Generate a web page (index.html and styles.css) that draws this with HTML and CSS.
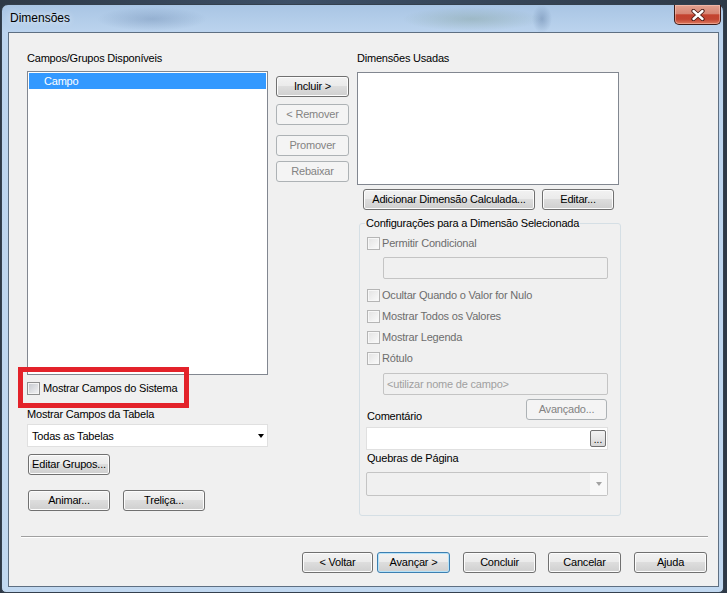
FILE: index.html
```html
<!DOCTYPE html>
<html lang="pt">
<head>
<meta charset="utf-8">
<title>Dimensões</title>
<link rel="stylesheet" href="styles.css">
</head>
<body>
<div class="window">
  <div class="titlebar">
    <span class="title">Dimensões</span>
    <div class="close">
      <svg width="14" height="12" viewBox="0 0 14 12">
        <path d="M2.5 2 L11.5 10 M11.5 2 L2.5 10" stroke="#4a1a14" stroke-width="4.2" stroke-linecap="round"/>
        <path d="M2.5 2 L11.5 10 M11.5 2 L2.5 10" stroke="#ffffff" stroke-width="2.4" stroke-linecap="round"/>
      </svg>
    </div>
  </div>
  <div class="client">
    <div class="columns">
      <div class="col col-left">
        <div class="label">Campos/Grupos Disponíveis</div>
        <div class="listbox list-left">
          <div class="item selected">Campo</div>
        </div>
        <div class="check sys"><span class="box"></span><span class="ctext">Mostrar Campos do Sistema</span></div>
        <div class="label lbl-tabela">Mostrar Campos da Tabela</div>
        <div class="combo"><span>Todas as Tabelas</span><span class="arrow"></span></div>
        <div class="btn btn-grupos">Editar Grupos...</div>
        <div class="row-anim">
          <div class="btn btn-w82">Animar...</div>
          <div class="btn btn-w82">Treliça...</div>
        </div>
      </div>
      <div class="col col-mid">
        <div class="btn btn-mid">Incluir &gt;</div>
        <div class="btn btn-mid disabled m-rem">&lt; Remover</div>
        <div class="btn btn-mid disabled m-pro">Promover</div>
        <div class="btn btn-mid disabled m-reb">Rebaixar</div>
      </div>
      <div class="col col-right">
        <div class="label">Dimensões Usadas</div>
        <div class="listbox list-right"></div>
        <div class="row-add">
          <div class="btn btn-add">Adicionar Dimensão Calculada...</div>
          <div class="btn btn-edit">Editar...</div>
        </div>
        <fieldset class="group">
          <legend>Configurações para a Dimensão Selecionada</legend>
          <div class="check dis g-first"><span class="box"></span><span class="ctext">Permitir Condicional</span></div>
          <div class="textbox dis-box tb-cond"></div>
          <div class="check dis g-ocultar"><span class="box"></span><span class="ctext">Ocultar Quando o Valor for Nulo</span></div>
          <div class="check dis g-next"><span class="box"></span><span class="ctext">Mostrar Todos os Valores</span></div>
          <div class="check dis g-next"><span class="box"></span><span class="ctext">Mostrar Legenda</span></div>
          <div class="check dis g-next"><span class="box"></span><span class="ctext">Rótulo</span></div>
          <div class="textbox dis-box tb-rot">&lt;utilizar nome de campo&gt;</div>
          <div class="row-coment">
            <div class="label lbl-coment">Comentário</div>
            <div class="btn disabled btn-avanc">Avançado...</div>
          </div>
          <div class="textbox tb-coment"><div class="dots">...</div></div>
          <div class="label lbl-quebras">Quebras de Página</div>
          <div class="combo dis-combo"><span></span><span class="arrow-zone"><span class="arrow gray"></span></span></div>
        </fieldset>
      </div>
    </div>
    <div class="separator"></div>
    <div class="footer">
      <div class="btn btn-foot f-voltar">&lt; Voltar</div>
      <div class="btn btn-foot default f-avancar">Avançar &gt;</div>
      <div class="btn btn-foot f-gap">Concluir</div>
      <div class="btn btn-foot f-gap2">Cancelar</div>
      <div class="btn btn-foot f-gap">Ajuda</div>
    </div>
    <div class="annotation"></div>
  </div>
</div>
</body>
</html>
```
FILE: styles.css
```css
* { box-sizing: border-box; }
html, body { margin: 0; padding: 0; }
body {
  width: 727px;
  height: 593px;
  overflow: hidden;
  background: linear-gradient(90deg, #2e3947, #3d4f66 40%, #2e3947);
  font-family: "Liberation Sans", Arial, sans-serif;
  font-size: 11px;
  letter-spacing: -0.2px;
  color: #000;
}

.window {
  margin: 4px 0 0 1px;
  width: 723px;
  height: 589px;
  border: 1px solid #34404e;
  border-radius: 7px 7px 5px 5px;
  padding: 0 4px 5px 6px;
  display: flex;
  flex-direction: column;
  background:
    radial-gradient(55px 12px at 150px 14px, rgba(95, 125, 165, 0.35), rgba(95, 125, 165, 0)),
    radial-gradient(70px 12px at 470px 14px, rgba(110, 140, 120, 0.3), rgba(110, 140, 120, 0)),
    radial-gradient(10px 14px at 540px 14px, rgba(70, 100, 140, 0.35), rgba(70, 100, 140, 0)),
    linear-gradient(#a9c5e4, #bcd4ee 28px, #c1d8f0);
}

.titlebar {
  height: 27px;
  display: flex;
  justify-content: space-between;
  align-items: flex-start;
}
.title {
  padding: 6px 0 0 2px;
  font-size: 12px;
  line-height: 14px;
  letter-spacing: 0;
  color: #000;
  text-shadow: 0 0 6px rgba(255, 255, 255, 0.9);
}
.close {
  width: 47px;
  height: 20px;
  margin-right: -2px;
  border: 1px solid #3e1c18;
  border-top: none;
  border-radius: 0 0 5px 5px;
  background: linear-gradient(#e3a18f 0%, #d78675 45%, #c4432f 52%, #c24532 75%, #de7a5e 100%);
  box-shadow: inset 0 0 0 1px rgba(255, 210, 200, 0.45);
  display: flex;
  align-items: center;
  justify-content: center;
}

.client {
  position: relative;
  flex: 1;
  border: 1px solid #5e6f82;
  background: #f0f0f0;
  padding-top: 19px;
}

.columns {
  display: grid;
  grid-template-columns: 241px 73px 263px;
  column-gap: 8px;
  align-items: start;
  padding-left: 18px;
}
.col { display: flex; flex-direction: column; align-items: flex-start; }

.label { line-height: 13px; height: 13px; white-space: nowrap; }

.listbox {
  background: #fff;
  border: 1px solid #828790;
  padding: 1px;
}
.list-left { margin-top: 6px; width: 241px; height: 304px; }
.list-right { margin-top: 7px; width: 262px; height: 113px; }
.item { height: 16px; line-height: 16px; padding-left: 15px; }
.item.selected { background: #3399ff; color: #fff; }

.check { display: flex; align-items: center; height: 13px; line-height: 13px; white-space: nowrap; }
.box {
  width: 13px;
  height: 13px;
  border: 1px solid #8e8f8f;
  background: linear-gradient(135deg, #c3c7cd, #f4f4f5);
  box-shadow: inset 0 0 0 1px #f4f4f4;
  flex: none;
}
.ctext { margin-left: 3px; }
.check.dis { color: #6d6d6d; padding-left: 1px; }
.check.dis .box {
  border-color: #b5b5b5;
  background: linear-gradient(135deg, #e2e2e2, #fbfbfb);
  box-shadow: inset 0 0 0 1px #f7f7f7;
}
.check.dis .ctext { margin-left: 2px; }
.sys { margin-top: 7px; }
.lbl-tabela { margin-top: 13px; }

.combo {
  margin-top: 3px;
  width: 241px;
  height: 23px;
  background: #fff;
  border: 1px solid #e0e0e0;
  display: flex;
  align-items: center;
  justify-content: space-between;
  padding: 0 3px 0 4px;
}
.arrow {
  width: 0;
  height: 0;
  border-left: 3.5px solid transparent;
  border-right: 3.5px solid transparent;
  border-top: 4px solid #000;
}
.arrow.gray { border-top-color: #a3a3a3; }

.btn {
  height: 21px;
  border: 1px solid #707070;
  border-radius: 3px;
  background: linear-gradient(#f2f2f2 0%, #ebebeb 45%, #dddddd 50%, #cfcfcf 100%);
  box-shadow: inset 0 0 0 1px #fcfcfc;
  display: flex;
  align-items: center;
  justify-content: center;
  white-space: nowrap;
  line-height: 13px;
  padding-bottom: 1px;
}
.btn.disabled {
  border-color: #adb2b5;
  background: #f4f4f4;
  box-shadow: none;
  color: #838383;
}
.btn.default {
  border-color: #3c7fb1;
  box-shadow: inset 0 0 0 1px #b6e2f8;
}

.btn-grupos { margin: 7px 0 0 1px; width: 82px; }
.row-anim { display: flex; gap: 13px; margin: 15px 0 0 1px; }
.btn-w82 { width: 82px; }

.col-mid { padding-top: 24px; }
.btn-mid { width: 73px; }
.m-rem { margin-top: 7px; }
.m-pro { margin-top: 10px; }
.m-reb { margin-top: 5px; }

.row-add { display: flex; gap: 7px; margin-top: 4px; padding-left: 6px; }
.btn-add { width: 172px; }
.btn-edit { width: 72px; }

.group {
  margin: 7px 0 0 2px;
  width: 262px;
  min-width: 0;
  border: 1px solid #d5dfe5;
  border-radius: 3px;
  padding: 0 12px 19px 6px;
  display: flex;
  flex-direction: column;
  align-items: flex-start;
}
.group legend {
  padding: 0 1px;
  margin-left: -1px;
  line-height: 13px;
  white-space: nowrap;
}
.g-first { margin-top: 7px; }
.g-ocultar { margin-top: 10px; }
.g-next { margin-top: 8px; }

.textbox {
  background: #fff;
  border: 1px solid #e0e0e0;
  display: flex;
  align-items: center;
}
.dis-box {
  background: #f0f0f0;
  border: 1px solid #c4c4c4;
  border-radius: 2px;
  color: #a0a0a0;
  padding-left: 3px;
}
.tb-cond { margin: 7px 0 0 17px; width: 225px; height: 22px; }
.tb-rot { margin: 8px 0 0 17px; width: 225px; height: 22px; }

.row-coment {
  margin-top: 4px;
  width: 242px;
  display: flex;
  justify-content: space-between;
  align-items: flex-start;
}
.lbl-coment { margin-top: 11px; padding-left: 1px; }
.btn-avanc { width: 81px; margin-right: 1px; }

.tb-coment {
  margin-top: 4px;
  width: 242px;
  height: 23px;
  justify-content: flex-end;
  padding-right: 1px;
}
.dots {
  width: 16px;
  height: 17px;
  border: 1px solid #707070;
  border-radius: 2px;
  background: linear-gradient(#f2f2f2, #e6e6e6 50%, #d6d6d6);
  display: flex;
  justify-content: center;
  align-items: flex-end;
  line-height: 9px;
  padding-bottom: 2px;
  letter-spacing: 0;
  font-size: 10px;
}
.lbl-quebras { margin-top: 2px; padding-left: 1px; }
.dis-combo {
  margin-top: 7px;
  width: 242px;
  height: 24px;
  background: #f0f0f0;
  border: 1px solid #c4c4c4;
  border-radius: 2px;
  padding: 0;
}
.arrow-zone {
  width: 17px;
  height: 22px;
  background: #f8f8f8;
  display: flex;
  align-items: center;
  justify-content: center;
}

.separator {
  margin: 20px 10px 0 12px;
  height: 2px;
  border-top: 1px solid #a0a0a0;
  border-bottom: 1px solid #ffffff;
}
.footer {
  margin-top: 14px;
  display: flex;
  justify-content: flex-end;
  padding-right: 11px;
}
.btn-foot { width: 73px; }
.f-voltar { width: 71px; }
.f-avancar { margin-left: 4px; }
.f-gap { margin-left: 13px; }
.f-gap2 { margin-left: 12px; }

.annotation {
  position: absolute;
  left: 9px;
  top: 334px;
  width: 171px;
  height: 41px;
  border: 5px solid #e3222a;
}
```
